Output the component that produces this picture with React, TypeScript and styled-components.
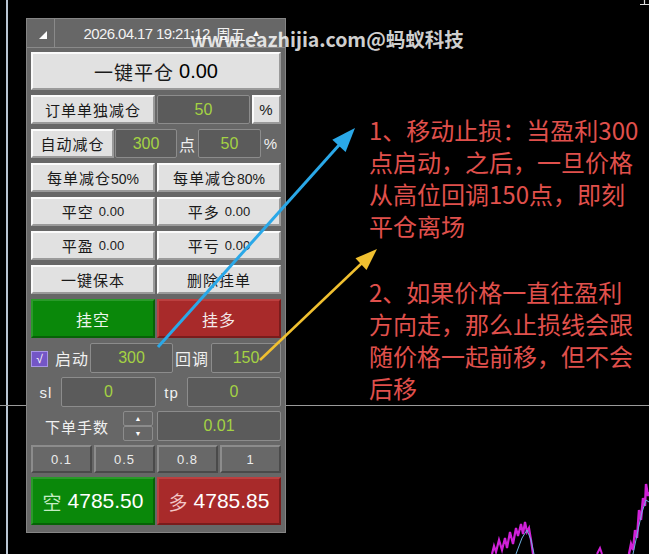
import React from 'react'
import styled, { createGlobalStyle, css } from 'styled-components'

const GlobalStyle = createGlobalStyle`
  html, body {
    margin: 0;
    padding: 0;
    background: #000;
  }
  * {
    box-sizing: border-box;
  }
`

const FONT = `"Liberation Sans", "Noto Sans CJK SC", sans-serif`

const Screen = styled.div`
  position: relative;
  width: 649px;
  height: 554px;
  overflow: hidden;
  background: #000;
  font-family: ${FONT};
`

const ChartLayer = styled.svg`
  position: absolute;
  left: 0;
  top: 0;
  width: 649px;
  height: 554px;
`

const OverlayLayer = styled.svg`
  position: absolute;
  left: 0;
  top: 0;
  width: 649px;
  height: 554px;
  pointer-events: none;
`

const Layout = styled.div`
  position: relative;
  display: flex;
  align-items: flex-start;
  padding: 18px 0 0 26px;
`

const Panel = styled.div`
  width: 260px;
  background: #676767;
  border: 1px solid #858585;
  display: flex;
  flex-direction: column;
`

const Header = styled.div`
  height: 29px;
  display: flex;
  border-bottom: 1px solid #8a8a8a;
`

const HeaderToggle = styled.div`
  width: 28px;
  border-right: 1px solid #8a8a8a;
  display: flex;
  align-items: center;
  justify-content: center;
  padding: 4px 0 0 4px;
`

const HeaderTitle = styled.div`
  flex: 1;
  display: flex;
  align-items: center;
  justify-content: center;
  gap: 6px;
  padding-left: 4px;
  color: #f2f2f2;
  font-size: 15px;
  letter-spacing: -0.6px;
`

const SmallArrow = styled.span`
  font-size: 9px;
  color: #fff;
  letter-spacing: 0;
`

const Body = styled.div`
  display: flex;
  flex-direction: column;
  gap: 5px;
  padding: 4px 4px 0 4px;
`

const Lower = styled.div`
  display: flex;
  flex-direction: column;
  gap: 4px;
  padding-bottom: 7px;
`

const Row = styled.div<{ $h: number; $gap?: number }>`
  display: flex;
  align-items: center;
  height: ${(p) => p.$h}px;
  gap: ${(p) => p.$gap ?? 0}px;
`

type Tone = 'light' | 'green' | 'red' | 'gray'

const toneStyles = {
  light: css`
    background: #e1e1e1;
    color: #1a1a1a;
    border-top: 2px solid #fbfbfb;
    border-left: 2px solid #fbfbfb;
    border-bottom: 2px solid #9a9a9a;
    border-right: 2px solid #9a9a9a;
  `,
  green: css`
    background: #0a880a;
    color: #eef6ee;
    border-top: 2px solid #2a9a2a;
    border-left: 2px solid #2a9a2a;
    border-bottom: 2px solid #066206;
    border-right: 2px solid #066206;
  `,
  red: css`
    background: #a82a2a;
    color: #f4eaea;
    border-top: 2px solid #bc4040;
    border-left: 2px solid #bc4040;
    border-bottom: 2px solid #7a1c1c;
    border-right: 2px solid #7a1c1c;
  `,
  gray: css`
    background: #686868;
    color: #ececec;
    border-top: 2px solid #8c8c8c;
    border-left: 2px solid #8c8c8c;
    border-bottom: 2px solid #4a4a4a;
    border-right: 2px solid #4a4a4a;
  `,
}

const Button = styled.div<{ $tone?: Tone; $w?: number; $size?: number }>`
  ${(p) => toneStyles[p.$tone ?? 'light']}
  width: ${(p) => (p.$w ? `${p.$w}px` : 'auto')};
  flex: ${(p) => (p.$w ? 'none' : '1')};
  height: 100%;
  display: flex;
  align-items: center;
  justify-content: center;
  gap: 5px;
  font-size: ${(p) => p.$size ?? 15}px;
  letter-spacing: 1px;
  white-space: nowrap;
`

const Num = styled.span<{ $size?: number; $bold?: boolean; $color?: string }>`
  font-family: "Liberation Sans", sans-serif;
  font-size: ${(p) => p.$size ?? 13}px;
  font-weight: ${(p) => (p.$bold ? 600 : 400)};
  color: ${(p) => p.$color ?? 'inherit'};
  letter-spacing: 0;
`

const Cjk = styled.span<{ $color?: string; $size?: number }>`
  color: ${(p) => p.$color ?? 'inherit'};
  font-size: ${(p) => (p.$size ? `${p.$size}px` : 'inherit')};
`

const Field = styled.div<{ $w?: number }>`
  width: ${(p) => (p.$w ? `${p.$w}px` : 'auto')};
  flex: ${(p) => (p.$w ? 'none' : '1')};
  height: 100%;
  background: #5b5b5b;
  border: 1px solid #8c8c8c;
  border-radius: 2px;
  display: flex;
  align-items: center;
  justify-content: center;
  color: #a4d243;
  font-size: 16px;
`

const Label = styled.div<{ $w?: number; $size?: number; $pad?: number }>`
  width: ${(p) => (p.$w ? `${p.$w}px` : 'auto')};
  flex: ${(p) => (p.$w ? 'none' : '1')};
  display: flex;
  align-items: center;
  justify-content: center;
  padding-left: ${(p) => p.$pad ?? 0}px;
  color: #f0f0f0;
  font-size: ${(p) => p.$size ?? 15}px;
  letter-spacing: 1px;
`

const Check = styled.div`
  width: 17px;
  height: 16px;
  margin-top: 2px;
  background: #7456c6;
  border: 1px solid #a896e6;
  color: #fff;
  font-size: 12px;
  display: flex;
  align-items: center;
  justify-content: center;
`

const Spinner = styled.div`
  width: 30px;
  height: 100%;
  display: flex;
  flex-direction: column;
  margin-right: 4px;
`

const SpinButton = styled.div`
  flex: 1;
  background: #676767;
  border: 1px solid #8c8c8c;
  border-radius: 2px;
  color: #fff;
  font-size: 7px;
  display: flex;
  align-items: center;
  justify-content: center;
`

const Notes = styled.div`
  margin: 96px 0 0 83px;
  display: flex;
  flex-direction: column;
  gap: 34px;
`

const Note = styled.p`
  margin: 0;
  color: #e0504c;
  font-family: "Noto Sans CJK SC", sans-serif;
  font-size: 24px;
  line-height: 32px;
  white-space: nowrap;
`

const Watermark = styled.div`
  position: absolute;
  left: 190px;
  top: 24px;
  color: rgba(255, 255, 255, 0.82);
  font-family: "Noto Sans CJK SC", sans-serif;
  font-weight: 700;
  font-size: 19.5px;
  white-space: nowrap;
`

const Chart = () => (
  <ChartLayer viewBox="0 0 649 554">
    <line x1="7" y1="0" x2="7" y2="554" stroke="#b9c5d2" strokeWidth="2" />
    <line x1="0" y1="405.5" x2="649" y2="405.5" stroke="#9a9a9a" strokeWidth="1" />
    <path d="M640 4.5 H649 M644.5 0 V4.5" stroke="#ddd" strokeWidth="1.2" fill="none" />
    <path
      d="M492 554 L494 546 L496 552 L499 540 L502 550 L505 538 L507 548 L510 532 L513 544 L516 528 L518 536 L521 524 L523 534 L525 522 L527 532 L529 528 L531 540 L533 554"
      stroke="#d020d8"
      strokeWidth="2.2"
      fill="none"
    />
    <path d="M516 554 L522 538 L527 530 L531 540 L534 554" stroke="#6fb0e0" strokeWidth="1" fill="none" />
    <path d="M597 554 L600 548 L602 554" stroke="#d020d8" strokeWidth="2" fill="none" />
    <path
      d="M629 554 L631 544 L633 550 L635 530 L637 538 L639 510 L641 520 L643 498 L645 506 L646 484 L648 496 L649 492"
      stroke="#d020d8"
      strokeWidth="2.4"
      fill="none"
    />
    <path d="M633 554 L638 530 L642 512 L646 500 L649 502" stroke="#6fb0e0" strokeWidth="1" fill="none" />
  </ChartLayer>
)

const Arrows = () => (
  <OverlayLayer viewBox="0 0 649 554">
    <line x1="158" y1="347" x2="340" y2="144" stroke="#2aa8e8" strokeWidth="3" />
    <polygon points="355,128 345.6,151.9 332.3,139.8" fill="#2aa8e8" />
    <line x1="260" y1="360" x2="362" y2="263" stroke="#f0c030" strokeWidth="2.5" />
    <polygon points="377,249 366.5,269.9 355.5,258.3" fill="#f0c030" />
  </OverlayLayer>
)

const TradePanel = () => (
  <Panel>
    <Header>
      <HeaderToggle>
        <svg width="8" height="8" viewBox="0 0 8 8">
          <polygon points="8,0 8,8 0,8" fill="#fff" />
        </svg>
      </HeaderToggle>
      <HeaderTitle>
        <span>2026.04.17 19:21:12</span>
        <span style={{ letterSpacing: 0 }}>周五</span>
        <SmallArrow>▲</SmallArrow>
      </HeaderTitle>
    </Header>
    <Body>
      <Row $h={38}>
        <Button $size={19}>
          一键平仓 <Num $size={20} $color="#000">0.00</Num>
        </Button>
      </Row>
      <Row $h={29} $gap={2}>
        <Button $w={124}>订单单独减仓</Button>
        <Field $w={93}>50</Field>
        <Button $w={29}>%</Button>
      </Row>
      <Row $h={29}>
        <Button $w={83}>自动减仓</Button>
        <Field $w={62} style={{ marginLeft: 1 }}>300</Field>
        <Label $w={21} $size={16}>点</Label>
        <Field $w={63}>50</Field>
        <Label $size={15}>%</Label>
      </Row>
      <Row $h={29} $gap={2}>
        <Button>
          <span>每单减仓<Num $size={14}>50%</Num></span>
        </Button>
        <Button>
          <span>每单减仓<Num $size={14}>80%</Num></span>
        </Button>
      </Row>
      <Row $h={29} $gap={2}>
        <Button>
          平空 <Num>0.00</Num>
        </Button>
        <Button>
          平多 <Num>0.00</Num>
        </Button>
      </Row>
      <Row $h={29} $gap={2}>
        <Button>
          平盈 <Num>0.00</Num>
        </Button>
        <Button>
          平亏 <Num>0.00</Num>
        </Button>
      </Row>
      <Row $h={29} $gap={2}>
        <Button>一键保本</Button>
        <Button>删除挂单</Button>
      </Row>
      <Row $h={39} $gap={2}>
        <Button $tone="green" $size={16}>挂空</Button>
        <Button $tone="red" $size={16}>挂多</Button>
      </Row>
      <Lower>
        <Row $h={30}>
          <Check>√</Check>
          <Label $w={42} $size={16} $pad={6}>启动</Label>
          <Field $w={83}>300</Field>
          <Label $w={38} $size={16}>回调</Label>
          <Field $w={70}>150</Field>
        </Row>
        <Row $h={30}>
          <Label $w={30} $size={15}>sl</Label>
          <Field $w={95}>0</Field>
          <Label $w={31} $size={15}>tp</Label>
          <Field $w={94}>0</Field>
        </Row>
        <Row $h={30}>
          <Label $w={92} $size={15}>下单手数</Label>
          <Spinner>
            <SpinButton>▲</SpinButton>
            <SpinButton>▼</SpinButton>
          </Spinner>
          <Field>0.01</Field>
        </Row>
        <Row $h={28} $gap={2}>
          <Button $tone="gray" $size={13}>0.1</Button>
          <Button $tone="gray" $size={13}>0.5</Button>
          <Button $tone="gray" $size={13}>0.8</Button>
          <Button $tone="gray" $size={13}>1</Button>
        </Row>
        <Row $h={48} $gap={2}>
          <Button $tone="green">
            <Cjk $color="#c4ecc4" $size={19}>空</Cjk>
            <Num $size={21} $color="#fff">4785.50</Num>
          </Button>
          <Button $tone="red">
            <Cjk $color="#f2c6c6" $size={19}>多</Cjk>
            <Num $size={21} $color="#fff">4785.85</Num>
          </Button>
        </Row>
      </Lower>
    </Body>
  </Panel>
)

export default function App() {
  return (
    <Screen>
      <GlobalStyle />
      <Chart />
      <Layout>
        <TradePanel />
        <Notes>
          <Note>
            1、移动止损：当盈利300
            <br />
            点启动，之后，一旦价格
            <br />
            从高位回调150点，即刻
            <br />
            平仓离场
          </Note>
          <Note>
            2、如果价格一直往盈利
            <br />
            方向走，那么止损线会跟
            <br />
            随价格一起前移，但不会
            <br />
            后移
          </Note>
        </Notes>
      </Layout>
      <Watermark>www.eazhijia.com@蚂蚁科技</Watermark>
      <Arrows />
    </Screen>
  )
}
